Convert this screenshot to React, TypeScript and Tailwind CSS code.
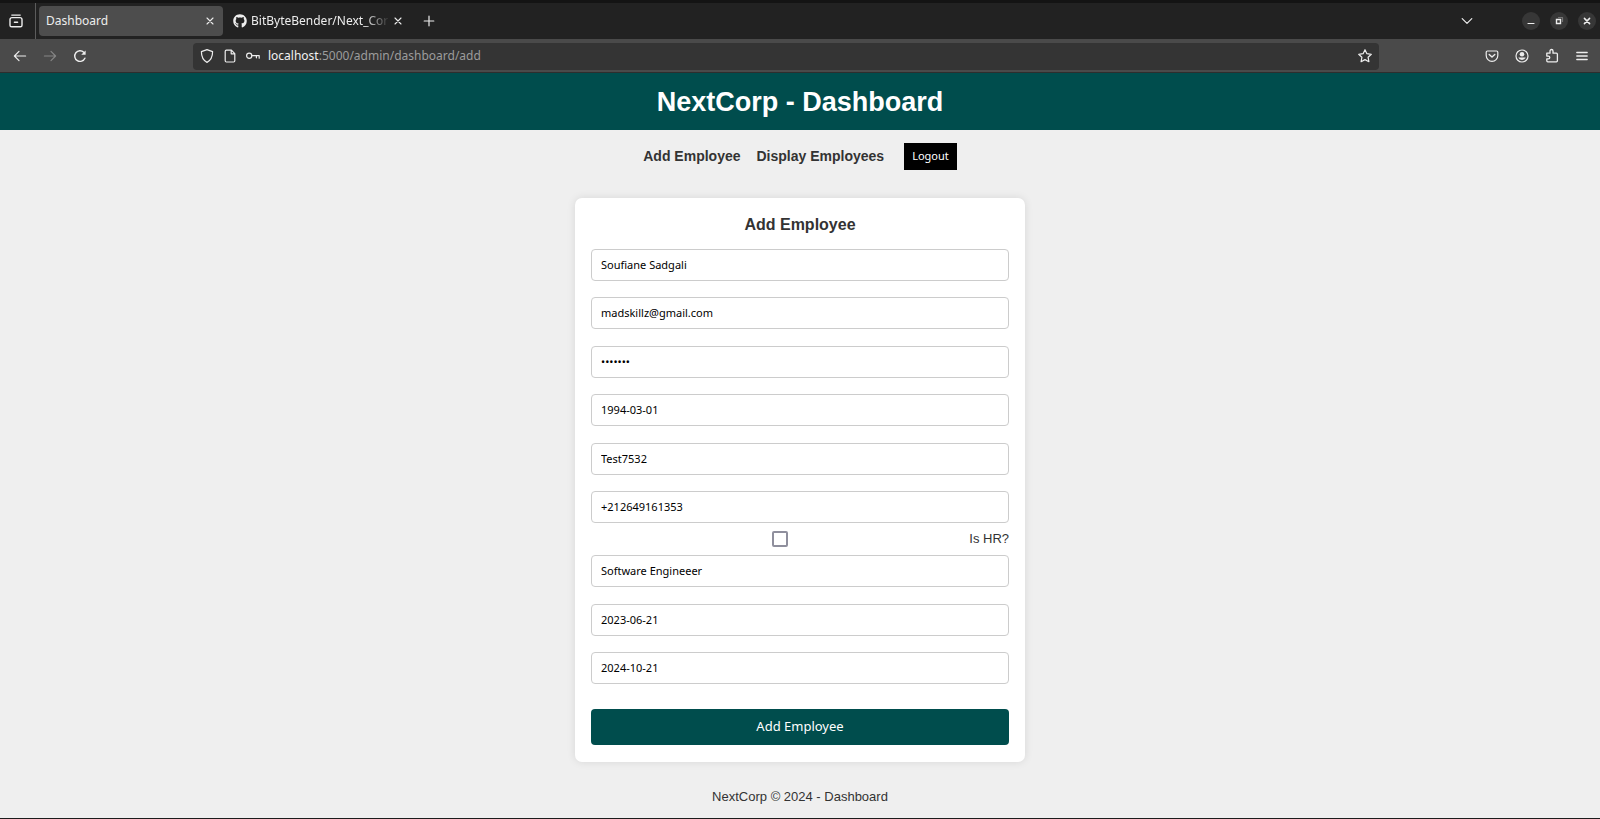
import type { ReactNode } from "react";
import { FaGithub } from "react-icons/fa";

const ui = "font-['Noto_Sans','Open_Sans',sans-serif]";

type IconProps = { className?: string; children: ReactNode };

function Icon({ className = "size-4", children }: IconProps) {
  return (
    <svg
      className={className}
      viewBox="0 0 16 16"
      fill="none"
      stroke="currentColor"
      strokeWidth="1.2"
      strokeLinecap="round"
      strokeLinejoin="round"
      aria-hidden="true"
    >
      {children}
    </svg>
  );
}

function CloseIcon() {
  return (
    <Icon>
      <path d="M5 5l6 6M11 5l-6 6" strokeWidth="1.1" />
    </Icon>
  );
}

function TabStrip() {
  return (
    <div className="flex h-[39px] items-center border-t-[3px] border-[#141414] bg-[#222222] pr-1">
      <button type="button" aria-label="View tabs" className="flex h-full w-9 items-center justify-center border-r border-[#5c5c5c] pr-1">
        <Icon>
          <path d="M3.8 2.100h8.400" strokeWidth="1.400" />
          <path d="M2 6.500a2 2 0 0 1 2-1.900h8a2 2 0 0 1 2 1.900v5.700a1.600 1.600 0 0 1-1.600 1.600H3.600A1.600 1.600 0 0 1 2 12.200z" strokeWidth="1.400" />
          <path d="M6.400 9.200h3.200" strokeWidth="1.400" />
        </Icon>
      </button>
      <div className="ml-[3px] flex h-[30px] w-[184px] items-center justify-between rounded bg-[#4d4d4d] pl-[7px] pr-[5px]">
        <span className="text-[12px] leading-4">Dashboard</span>
        <button type="button" aria-label="Close Dashboard tab">
          <CloseIcon />
        </button>
      </div>
      <div className="flex h-[30px] w-[187px] items-center pl-[10px] pr-1">
        <FaGithub className="size-[14px] shrink-0" aria-hidden="true" />
        <span className="ml-1 min-w-0 flex-1 whitespace-nowrap text-[12px] leading-4 [mask-image:linear-gradient(to_right,black_82%,transparent)]">
          BitByteBender/Next_Cor
        </span>
        <button type="button" aria-label="Close BitByteBender tab" className="shrink-0">
          <CloseIcon />
        </button>
      </div>
      <button type="button" aria-label="New tab" className="ml-[11px]">
        <Icon>
          <path d="M8 3.2v9.6M3.2 8h9.6" />
        </Icon>
      </button>
      <button type="button" aria-label="List all tabs" className="ml-auto mr-[47px]">
        <Icon>
          <path d="M3.2 5.6L8 10.4l4.8-4.8" />
        </Icon>
      </button>
      <div className="flex gap-[10px]">
        <button type="button" aria-label="Minimize" className="flex size-[18px] items-center justify-center rounded-full bg-[#373737]">
          <Icon>
            <path d="M5 10.500h6" />
          </Icon>
        </button>
        <button type="button" aria-label="Restore" className="flex size-[18px] items-center justify-center rounded-full bg-[#373737]">
          <Icon>
            <path d="M5.500 6.500h4v4h-4z" strokeLinejoin="miter" strokeWidth="1.400" />
            <path d="M7.500 4.500h4v4" strokeOpacity=".35" />
          </Icon>
        </button>
        <button type="button" aria-label="Close window" className="flex size-[18px] items-center justify-center rounded-full bg-[#373737]">
          <Icon>
            <path d="M5.400 5.400l5.200 5.200M10.600 5.400l-5.200 5.200" strokeWidth="1.500" />
          </Icon>
        </button>
      </div>
    </div>
  );
}

function Toolbar() {
  return (
    <div className="flex h-[34px] items-center border-b border-[#2e2e2e] bg-[#4a4a4a] pl-3 pr-[10px] pt-px">
      <div className="flex w-[181px] gap-[14px]">
        <button type="button" aria-label="Back">
          <Icon>
            <path d="M13.6 8H2.4M7 3.4L2.4 8 7 12.6" />
          </Icon>
        </button>
        <button type="button" aria-label="Forward" className="text-[#858585]">
          <Icon>
            <path d="M2.4 8h11.2M9 3.4L13.6 8 9 12.6" />
          </Icon>
        </button>
        <button type="button" aria-label="Reload">
          <Icon>
            <path d="M12.9 10.2A5.3 5.3 0 1 1 11.8 4.3" strokeWidth="1.4" />
            <path d="M13.6 2.4v4.4H9.2z" fill="currentColor" stroke="none" />
          </Icon>
        </button>
      </div>
      <div className="flex h-[27px] w-[1186px] min-w-0 shrink items-center rounded bg-[#343434] px-[6px]">
        <div className="flex gap-[7px]">
          <Icon>
            <path d="M8 1.6l5.6 2c0 5-1.6 8.8-5.6 10.8C4 12.400 2.400 8.600 2.400 3.600z" />
          </Icon>
          <Icon>
            <path d="M4.400 2.200h5l3.400 3.400v7.200a1.200 1.200 0 0 1-1.200 1.200H4.400a1.200 1.200 0 0 1-1.200-1.200V3.400a1.200 1.200 0 0 1 1.200-1.200zM9.200 2.400v3.400h3.400" />
          </Icon>
          <Icon>
            <circle cx="4.200" cy="7.800" r="2.600" />
            <path d="M6.800 7.600h7.400v2.600M11.400 7.600v2.200" />
          </Icon>
        </div>
        <a href="#add" className="ml-[7px] text-[12px] leading-4 text-[#9c9c9c]">
          <span className="text-[#f2f2f2]">localhost</span>:5000/admin/dashboard/add
        </a>
        <button type="button" aria-label="Bookmark this page" className="ml-auto">
          <Icon>
            <path d="M8 1.700l1.900 4 4.400.6-3.200 3 .8 4.400L8 11.600l-3.900 2.100.8-4.400-3.200-3 4.400-.6z" />
          </Icon>
        </button>
      </div>
      <div className="ml-auto flex gap-[14px]">
        <button type="button" aria-label="Save to Pocket">
          <Icon>
            <path d="M3.400 3h9.200a1.200 1.200 0 0 1 1.200 1.200v3.400a5.800 5.800 0 0 1-11.600 0V4.200A1.200 1.200 0 0 1 3.400 3z" />
            <path d="M5.200 6.400L8 9l2.800-2.600" strokeWidth="1.400" />
          </Icon>
        </button>
        <button type="button" aria-label="Account">
          <Icon>
            <circle cx="8" cy="8" r="6" />
            <circle cx="8" cy="6.200" r="2.300" fill="currentColor" stroke="none" />
            <path d="M4.300 9.600h7.400a4 4 0 0 1-7.400 0z" fill="currentColor" stroke="none" />
          </Icon>
        </button>
        <button type="button" aria-label="Extensions">
          <Icon>
            <path
              d="M2.800 5.200h3.200V3a1.500 1.500 0 0 1 3 0v2.200h3.400a1 1 0 0 1 1 1v6.600a1 1 0 0 1-1 1H3.800a1 1 0 0 1-1-1v-1.900h1.600a1.400 1.400 0 0 0 0-2.800H2.800z"
              strokeWidth="1.300"
            />
          </Icon>
        </button>
        <button type="button" aria-label="Menu">
          <Icon>
            <path d="M2.800 4.500h10.400M2.800 8h10.400M2.800 11.500h10.400" strokeWidth="1.300" />
          </Icon>
        </button>
      </div>
    </div>
  );
}

type Field = { label: string; value: string; type?: string };

const personalFields: Field[] = [
  { label: "Full name", value: "Soufiane Sadgali" },
  { label: "Email", value: "madskillz@gmail.com", type: "email" },
  { label: "Password", value: "1234567", type: "password" },
  { label: "Birth date", value: "1994-03-01" },
  { label: "Identity number", value: "Test7532" },
  { label: "Phone", value: "+212649161353", type: "tel" },
];

const jobFields: Field[] = [
  { label: "Job title", value: "Software Engineeer" },
  { label: "Hire date", value: "2023-06-21" },
  { label: "Contract end date", value: "2024-10-21" },
];

function TextField({ label, value, type = "text" }: Field) {
  return (
    <input
      type={type}
      aria-label={label}
      defaultValue={value}
      className={`${ui} h-8 w-full rounded border border-[#cccccc] bg-white px-[9px] pb-px text-[11px] text-black outline-none`}
    />
  );
}

export default function App() {
  return (
    <div className="flex min-h-screen flex-col border-b border-[#1c1c1c] bg-[#efefef] font-['Liberation_Sans',Arial,sans-serif] text-[13px] text-[#333333]">
      <div className={`${ui} text-[#ededed]`}>
        <TabStrip />
        <Toolbar />
      </div>

      <header className="bg-[#004d4d] pt-[14px] pb-3 text-center text-white">
        <h1 className="text-[27px] leading-[31px] font-bold">NextCorp - Dashboard</h1>
      </header>

      <nav className="flex items-center justify-center gap-4 pt-[13px] text-[14px] font-bold">
        <a href="#add">Add Employee</a>
        <a href="#display" className="pr-1">Display Employees</a>
        <button type="button" className={`${ui} h-[27px] bg-black px-2 text-[11px] font-normal text-white`}>
          Logout
        </button>
      </nav>

      <main className="flex justify-center pt-7">
        <form
          id="add"
          className="w-[450px] rounded-[7px] bg-white px-4 pt-[17px] pb-[17px] shadow-[0_0_8px_rgba(0,0,0,0.1)]"
          onSubmit={(event) => event.preventDefault()}
        >
          <h2 className="pb-[15px] text-center text-[16px] leading-[19px] font-bold">Add Employee</h2>
          <div className="flex min-h-[274px] flex-col justify-between">
            {personalFields.map((field) => (
              <TextField key={field.label} {...field} />
            ))}
          </div>
          <div className="flex h-8 items-center">
            <div className="flex flex-1 justify-center">
              <input
                id="is-hr"
                type="checkbox"
                className="size-4 appearance-none rounded-[2px] border-2 border-[#8f8f9d] bg-white checked:bg-[#004d4d]"
              />
            </div>
            <label htmlFor="is-hr">Is HR?</label>
          </div>
          <div className="flex min-h-[129px] flex-col justify-between">
            {jobFields.map((field) => (
              <TextField key={field.label} {...field} />
            ))}
          </div>
          <button type="submit" className={`${ui} mt-[25px] h-9 w-full rounded bg-[#004d4d] text-[13px] text-white`}>
            Add Employee
          </button>
        </form>
      </main>

      <footer className="pt-[27px] pb-3 text-center leading-4">NextCorp © 2024 - Dashboard</footer>
    </div>
  );
}
